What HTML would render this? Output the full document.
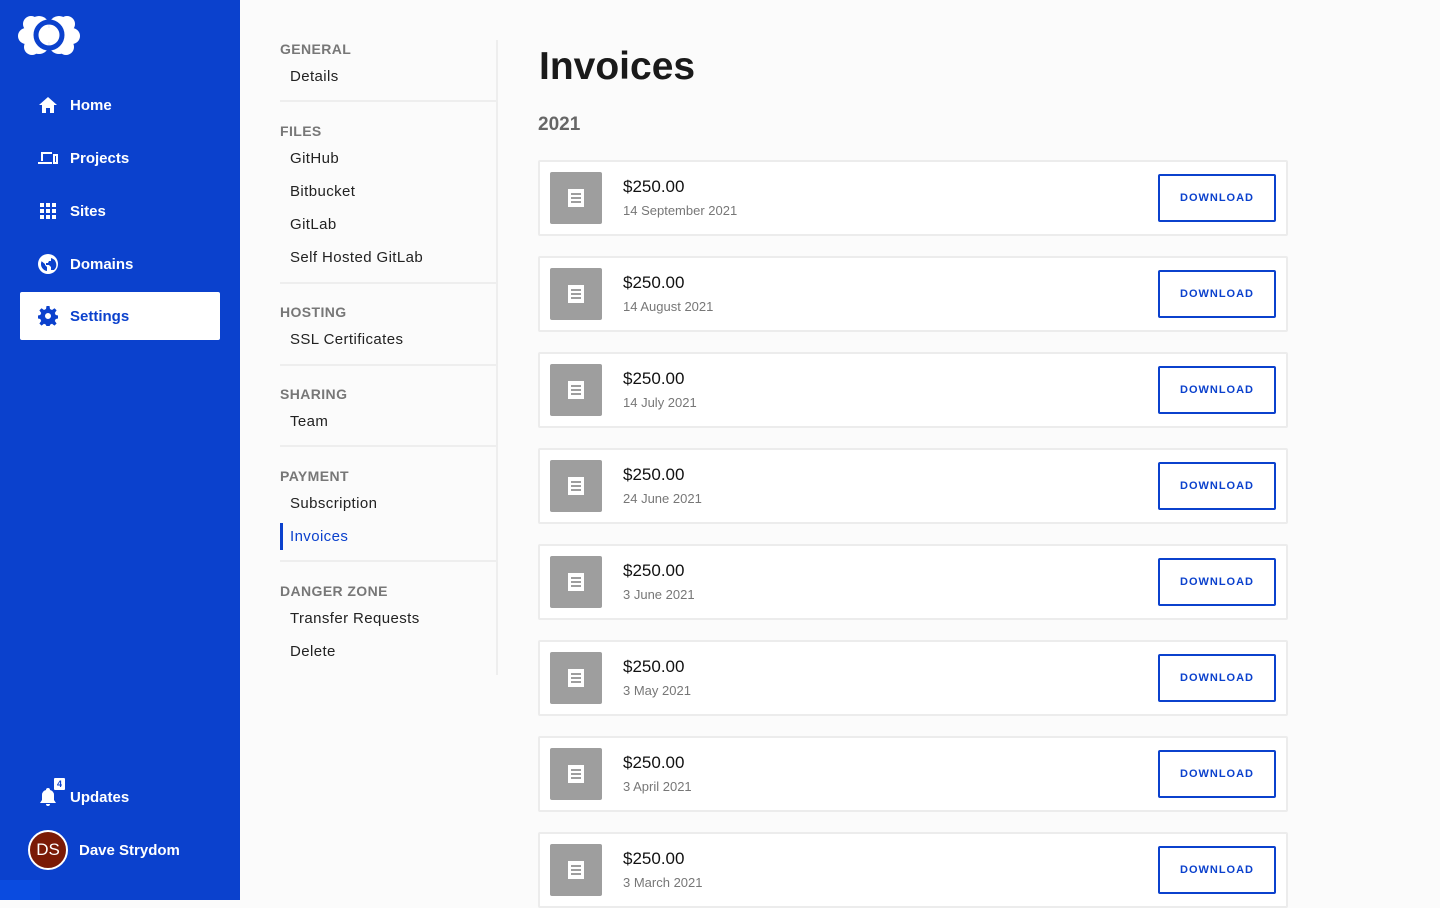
<!DOCTYPE html>
<html><head><meta charset="utf-8"><style>
*{margin:0;padding:0;box-sizing:border-box}
body{width:1440px;height:900px;overflow:hidden;background:#fbfbfb;font-family:"Liberation Sans",sans-serif;position:relative}
.side{position:absolute;left:0;top:0;width:240px;height:900px;background:#0b41cd}
.nav{position:absolute;left:20px;width:200px;height:48px;color:#fff;font-weight:bold;font-size:15px;display:flex;align-items:center;padding-left:18px}
.nav svg{width:20px;height:20px;margin-right:12px;fill:#fff}
.nav.act{background:#fff;color:#0b41cd;border-radius:2px}
.nav.act svg{fill:#0b41cd}
.lbl{position:absolute;left:280px;font-size:14px;font-weight:bold;color:#777;letter-spacing:.4px}
.it{position:absolute;left:290px;font-size:15px;color:#222;letter-spacing:.4px}
.sep{position:absolute;left:280px;width:217px;height:2px;background:#eee}
.vl{position:absolute;left:496px;top:40px;width:2px;height:635px;background:#eee}
h1{position:absolute;left:539px;top:45px;font-size:39px;font-weight:bold;color:#1a1a1a}
.yr{position:absolute;left:538px;top:114px;font-size:19px;font-weight:bold;color:#666}
.card{position:absolute;left:538px;width:750px;height:76px;background:#fff;border:2px solid #ececec;border-radius:2px}
.ic{position:absolute;left:10px;top:10px;width:52px;height:52px;background:#9e9e9e;border-radius:2px}
.ic i{position:absolute;left:18px;top:17px;width:16px;height:18px;background:#fff}
.ic i b{position:absolute;left:3px;width:10px;height:2px;background:#9e9e9e}
.amt{position:absolute;left:83px;top:15px;font-size:17px;color:#111}
.dt{position:absolute;left:83px;top:41px;font-size:13px;color:#777}
.btn{position:absolute;left:618px;top:12px;width:118px;height:48px;border:2px solid #0b41cd;border-radius:2px;color:#0b41cd;font-size:11px;font-weight:bold;letter-spacing:1px;display:flex;align-items:center;justify-content:center}
</style></head><body>
<div class="side">
<svg style="position:absolute;left:18px;top:12px" width="62" height="46" viewBox="0 0 62 46">
<g fill="#fff"><circle cx="13" cy="12" r="8"/><circle cx="8" cy="24" r="8"/><circle cx="14" cy="35" r="8"/><circle cx="21" cy="14" r="10"/><circle cx="21" cy="32" r="10"/><circle cx="49" cy="12" r="8"/><circle cx="54" cy="24" r="8"/><circle cx="48" cy="35" r="8"/><circle cx="41" cy="14" r="10"/><circle cx="41" cy="32" r="10"/></g>
<circle cx="31" cy="23" r="13" fill="none" stroke="#0b41cd" stroke-width="5"/>
<rect x="29" y="0" width="4" height="8" fill="#0b41cd"/><rect x="29" y="38" width="4" height="8" fill="#0b41cd"/>
<circle cx="31" cy="23" r="7.5" fill="#fff"/>
</svg>
<div class="nav" style="top:81px"><svg viewBox="0 0 20 20"><path d="M10 2L1 10h3v8h4v-5h4v5h4v-8h3z"/></svg>Home</div>
<div class="nav" style="top:134px"><svg viewBox="0 0 20 20"><path d="M3 4h11v2H5v7H3zM0 14h14v2H0zM15 6h5v10h-5zM17 8v6h1V8z" fill-rule="evenodd"/></svg>Projects</div>
<div class="nav" style="top:187px"><svg viewBox="0 0 20 20"><path d="M2 2h4v4H2zM8 2h4v4H8zM14 2h4v4h-4zM2 8h4v4H2zM8 8h4v4H8zM14 8h4v4h-4zM2 14h4v4H2zM8 14h4v4H8zM14 14h4v4h-4z"/></svg>Sites</div>
<div class="nav" style="top:240px"><svg viewBox="0 0 20 20"><path d="M10 0a10 10 0 100 20 10 10 0 000-20zM3 10c0-1 .2-2 .6-2.8L7 10v1l2 2v4A7 7 0 013 10zm10 6v-3l-2-2H8V9h2l1-2h2V4a7 7 0 013 12z"/></svg>Domains</div>
<div class="nav act" style="top:292px"><svg viewBox="0 0 20 20"><path d="M8.5 0h3l.5 3 2 1 2.5-1.8 2.1 2.1L16.8 7l.9 2 2.3.5v3l-2.3.5-.9 2 1.8 2.5-2.1 2.1-2.5-1.8-2 .9-.5 2.3h-3L8 18.7l-2-.9-2.5 1.8-2.1-2.1L3.2 15l-.9-2L0 12.5v-3L2.3 9l.9-2L1.4 4.4l2.1-2.1L6 4l2-1zM10 7a3 3 0 100 6 3 3 0 000-6z" fill-rule="evenodd"/></svg>Settings</div>
<div class="nav" style="top:773px"><svg viewBox="0 0 20 20"><path d="M10 1a2 2 0 012 2 5 5 0 014 5v5l2 3H2l2-3V8a5 5 0 014-5 2 2 0 012-2zM8 17h4a2 2 0 01-4 0z"/></svg>Updates</div>
<div style="position:absolute;left:54px;top:778px;width:11px;height:12px;background:#fff;color:#0b41cd;font-size:9px;font-weight:bold;text-align:center;line-height:12px;border-radius:1px">4</div>
<div style="position:absolute;left:28px;top:830px;width:40px;height:40px;border-radius:50%;background:#7a1a06;border:2px solid #fff;color:#fff;font-size:17px;text-align:center;line-height:36px">DS</div>
<div style="position:absolute;left:79px;top:842px;color:#fff;font-weight:bold;font-size:15px">Dave Strydom</div>
<div style="position:absolute;left:0;top:880px;width:40px;height:20px;background:#0a4be0"></div>
</div>

<div class="vl"></div>
<div class="lbl" style="top:41px">GENERAL</div><div class="it" style="top:68px">Details</div><div class="sep" style="top:100px"></div>
<div class="lbl" style="top:123px">FILES</div><div class="it" style="top:150px">GitHub</div><div class="it" style="top:183px">Bitbucket</div><div class="it" style="top:216px">GitLab</div><div class="it" style="top:249px">Self Hosted GitLab</div><div class="sep" style="top:282px"></div>
<div class="lbl" style="top:304px">HOSTING</div><div class="it" style="top:331px">SSL Certificates</div><div class="sep" style="top:364px"></div>
<div class="lbl" style="top:386px">SHARING</div><div class="it" style="top:413px">Team</div><div class="sep" style="top:445px"></div>
<div class="lbl" style="top:468px">PAYMENT</div><div class="it" style="top:495px">Subscription</div><div class="it" style="top:528px;color:#0b41cd">Invoices</div>
<div style="position:absolute;left:280px;top:523px;width:3px;height:27px;background:#0b41cd"></div><div class="sep" style="top:560px"></div>
<div class="lbl" style="top:583px">DANGER ZONE</div><div class="it" style="top:610px">Transfer Requests</div><div class="it" style="top:643px">Delete</div>

<h1>Invoices</h1>
<div class="yr">2021</div>

<div class="card" style="top:160px"><div class="ic"><i><b style="top:4px"></b><b style="top:8px"></b><b style="top:12px"></b></i></div><div class="amt">$250.00</div><div class="dt">14 September 2021</div><div class="btn">DOWNLOAD</div></div>
<div class="card" style="top:256px"><div class="ic"><i><b style="top:4px"></b><b style="top:8px"></b><b style="top:12px"></b></i></div><div class="amt">$250.00</div><div class="dt">14 August 2021</div><div class="btn">DOWNLOAD</div></div>
<div class="card" style="top:352px"><div class="ic"><i><b style="top:4px"></b><b style="top:8px"></b><b style="top:12px"></b></i></div><div class="amt">$250.00</div><div class="dt">14 July 2021</div><div class="btn">DOWNLOAD</div></div>
<div class="card" style="top:448px"><div class="ic"><i><b style="top:4px"></b><b style="top:8px"></b><b style="top:12px"></b></i></div><div class="amt">$250.00</div><div class="dt">24 June 2021</div><div class="btn">DOWNLOAD</div></div>
<div class="card" style="top:544px"><div class="ic"><i><b style="top:4px"></b><b style="top:8px"></b><b style="top:12px"></b></i></div><div class="amt">$250.00</div><div class="dt">3 June 2021</div><div class="btn">DOWNLOAD</div></div>
<div class="card" style="top:640px"><div class="ic"><i><b style="top:4px"></b><b style="top:8px"></b><b style="top:12px"></b></i></div><div class="amt">$250.00</div><div class="dt">3 May 2021</div><div class="btn">DOWNLOAD</div></div>
<div class="card" style="top:736px"><div class="ic"><i><b style="top:4px"></b><b style="top:8px"></b><b style="top:12px"></b></i></div><div class="amt">$250.00</div><div class="dt">3 April 2021</div><div class="btn">DOWNLOAD</div></div>
<div class="card" style="top:832px"><div class="ic"><i><b style="top:4px"></b><b style="top:8px"></b><b style="top:12px"></b></i></div><div class="amt">$250.00</div><div class="dt">3 March 2021</div><div class="btn">DOWNLOAD</div></div>
</body></html>
